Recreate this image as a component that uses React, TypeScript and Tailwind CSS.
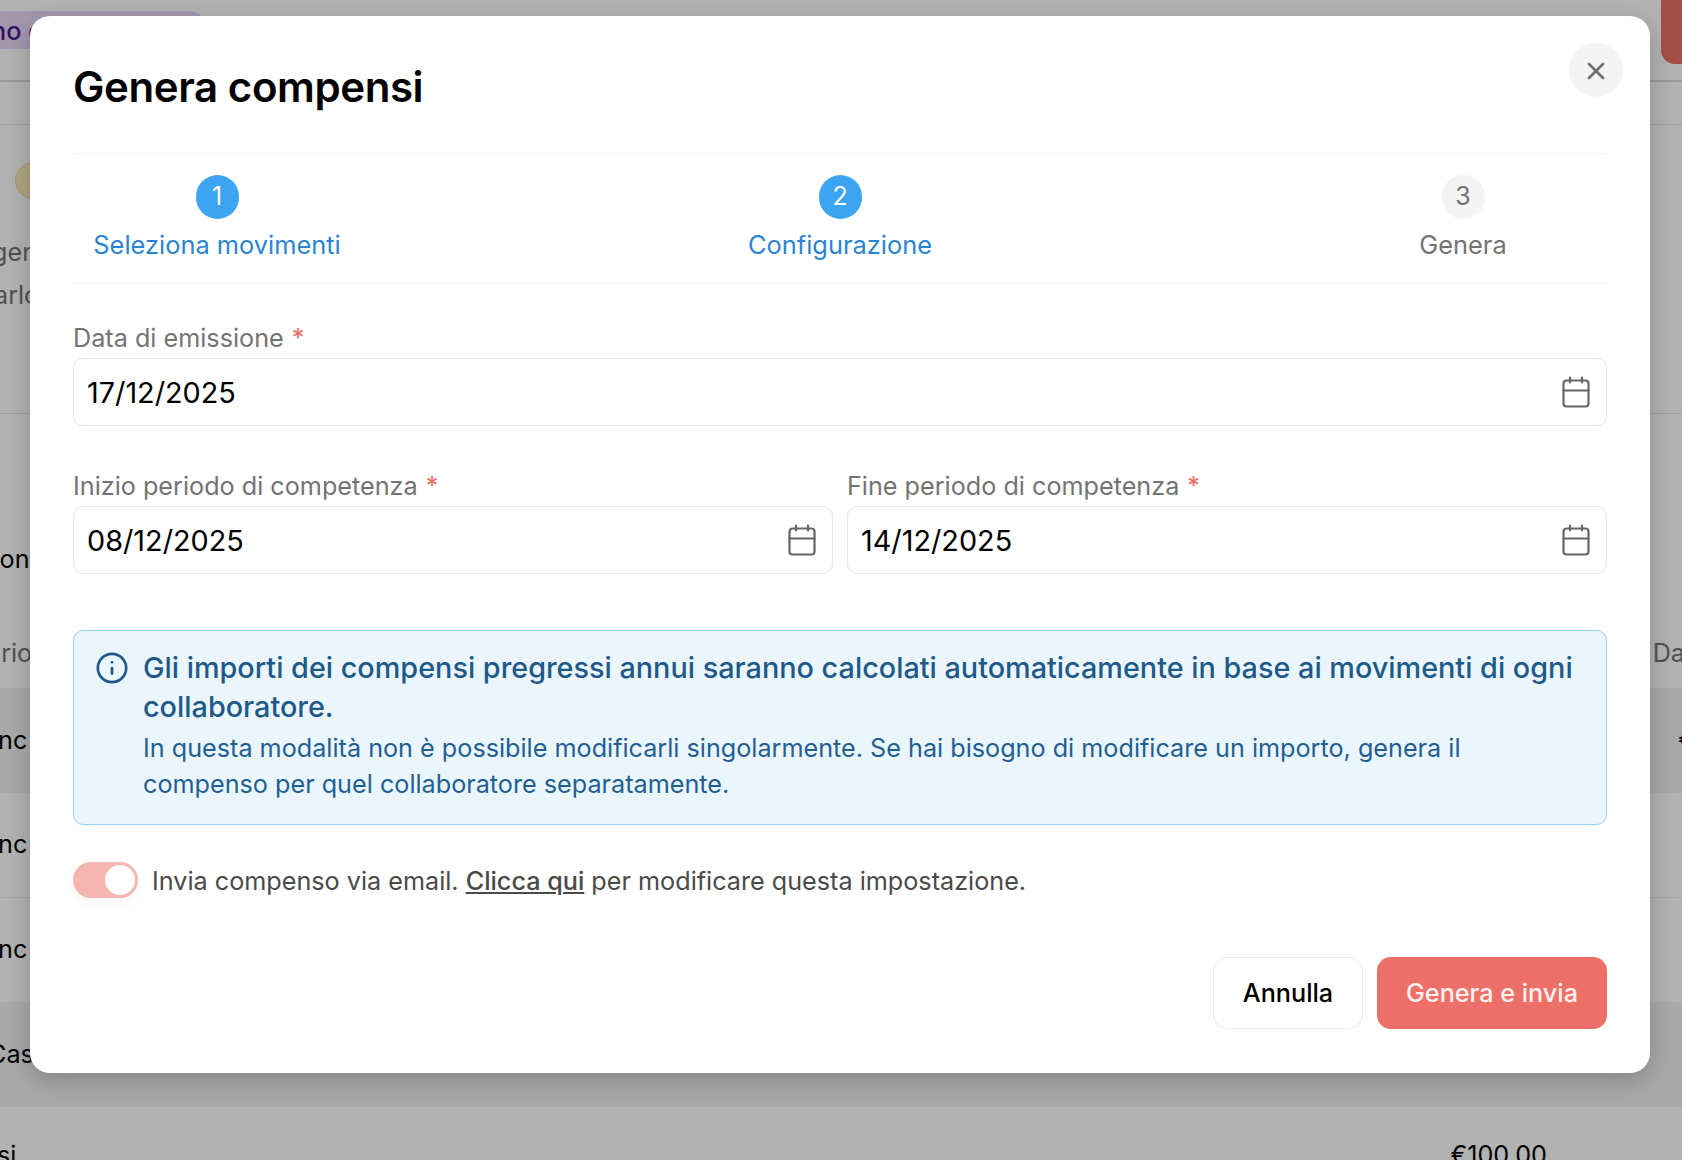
import { Info, X } from 'lucide-react';

function CalendarIcon() {
  return (
    <svg width="28" height="32" viewBox="0 0 28 32" fill="none" stroke="#666666" strokeWidth="2.2" strokeLinecap="round" className="shrink-0">
      <rect x="1.5" y="4.5" width="25" height="26" rx="3" />
      <path d="M1.5 14.5h25" />
      <path d="M8 1.5v5M20 1.5v5" />
    </svg>
  );
}

function Required() {
  return <span className="text-[#ef6b63] ml-2">*</span>;
}

function DateField({ label, value }: { label: string; value: string }) {
  return (
    <div className="flex-1 min-w-0">
      <div className="h-[38px] flex items-center text-[25.2px] text-[#737373]">
        {label}
        <Required />
      </div>
      <div className="h-[68px] flex items-center justify-between pl-[13px] pr-[16px] border border-[#e8e8e8] rounded-[10px] text-[28.8px] text-black">
        <span className="mt-[1px]">{value}</span>
        <CalendarIcon />
      </div>
    </div>
  );
}

function Step({ n, label, active }: { n: number; label: string; active: boolean }) {
  return (
    <div className="w-[288px] flex flex-col items-center">
      <div
        className={
          active
            ? 'w-[43px] h-[44px] rounded-full bg-[#3ba5f2] text-white flex items-center justify-center text-[25px]'
            : 'w-[43px] h-[44px] rounded-full bg-[#f4f4f4] text-[#737373] flex items-center justify-center text-[25px]'
        }
      >
        {n}
      </div>
      <div className={active ? 'mt-[7px] text-[25.4px] text-[#2a84d2]' : 'mt-[7px] text-[25.4px] text-[#737373]'}>{label}</div>
    </div>
  );
}

function Background() {
  return (
    <div className="text-[25.2px] text-black">
      <div className="h-[82px] border-b-2 border-[#d8d8d8] flex justify-between items-start">
        <div className="mt-[11px] w-[207px] h-[38px] rounded-r-[18px] bg-[#e9d9fb] text-[#4b1a8f] font-medium flex items-center">
          <span className="-ml-[9px] mt-[3px] whitespace-nowrap">no c</span>
        </div>
        <div className="w-[21px] h-[64px] rounded-bl-[14px] bg-[#ec7068]" />
      </div>
      <div className="h-[43px] border-b border-[#e2e2e2]" />
      <div className="h-[289px] pt-[37px] border-b border-[#e2e2e2]">
        <div className="ml-[15px] w-[37px] h-[37px] rounded-full bg-[#f9edbb] border border-[#eed98b]" />
        <div className="mt-[32px] -ml-[8px] text-[#737373] whitespace-nowrap leading-[43px]">
          <div>gen</div>
          <div className="ml-[2px]">arlo</div>
        </div>
      </div>
      <div className="h-[274px] flex flex-col justify-between">
        <div className="mt-[127px] -ml-[9px] whitespace-nowrap">fon</div>
        <div className="flex justify-between text-[#737373] pb-[15px] -ml-[13px] -mr-[3px]">
          <span>ario</span>
          <span>Da</span>
        </div>
      </div>
      <div className="h-[105px] bg-[#f2f2f2] flex items-center justify-between">
        <span className="-ml-[2px]">nc</span>
        <span className="-mr-[13px]">€</span>
      </div>
      <div className="h-[105px] border-b border-[#ededed] flex items-center">
        <span className="-ml-[2px]">nc</span>
      </div>
      <div className="h-[104px] flex items-center">
        <span className="-ml-[2px]">nc</span>
      </div>
      <div className="h-[105px] bg-[#f2f2f2] flex items-center">
        <span className="-ml-[12px]">Cas</span>
      </div>
      <div className="h-[53px] pt-[30px] flex items-start justify-between overflow-hidden pr-[135px]">
        <span className="-ml-[3px]">si</span>
        <span>€100,00</span>
      </div>
    </div>
  );
}

export default function App() {
  return (
    <div className="relative w-[1682px] h-[1160px] overflow-hidden bg-white font-['Inter',sans-serif]">
      <Background />
      <div className="absolute inset-0 bg-black/30 flex justify-center items-start pt-[16px]">
        <div className="relative w-[1620px] h-[1057px] ml-[-2px] bg-white rounded-[20px] px-[43px] shadow-[0_8px_24px_rgba(0,0,0,0.22)]">
          <button className="absolute right-[27px] top-[27px] w-[54px] h-[54px] rounded-full bg-[#f4f4f4] flex items-center justify-center text-[#707070]">
            <X size={28} strokeWidth={2.4} className="mt-[1px]" />
          </button>
          <div className="h-[138px] border-b border-[#f2f2f2] flex items-center">
            <h1 className="text-[42px] font-semibold text-black tracking-[-0.01em] mt-[4px]">Genera compensi</h1>
          </div>
          <div className="h-[130px] border-b border-[#f2f2f2] pt-[21px] flex justify-between">
            <Step n={1} label="Seleziona movimenti" active />
            <Step n={2} label="Configurazione" active />
            <Step n={3} label="Genera" active={false} />
          </div>
          <div className="mt-[36px]">
            <DateField label="Data di emissione" value="17/12/2025" />
          </div>
          <div className="mt-[42px] flex gap-[14px]">
            <DateField label="Inizio periodo di competenza" value="08/12/2025" />
            <DateField label="Fine periodo di competenza" value="14/12/2025" />
          </div>
          <div className="mt-[56px] h-[195px] border border-[#90d4fa] bg-[#ebf6fc] rounded-[10px] pl-[21px] pr-[30px] pt-[17px] flex gap-[14px] text-[#1d5a8a]">
            <Info size={34} strokeWidth={1.9} className="shrink-0 mt-[3px]" />
            <div>
              <div className="text-[28.8px] font-medium leading-[39px]">
                Gli importi dei compensi pregressi annui saranno calcolati automaticamente in base ai movimenti di ogni collaboratore.
              </div>
              <div className="text-[25.2px] leading-[36px] mt-[4px] text-[#1f5f94]">
                In questa modalità non è possibile modificarli singolarmente. Se hai bisogno di modificare un importo, genera il compenso per quel collaboratore separatamente.
              </div>
            </div>
          </div>
          <div className="mt-[36px] h-[38px] flex items-center gap-[14px] text-[25.2px] text-[#4a4a4a]">
            <div className="w-[65px] h-[36px] rounded-full bg-[#f5b5b1] flex items-center justify-end pr-[3px] shadow-[0_6px_12px_rgba(0,0,0,0.03)]">
              <div className="w-[30px] h-[30px] rounded-full bg-white" />
            </div>
            <span className="mt-[3px]">
              Invia compenso via email. <span className="font-medium underline">Clicca qui</span> per modificare questa impostazione.
            </span>
          </div>
          <div className="mt-[58px] flex justify-end gap-[14px] text-[25.2px]">
            <button className="w-[150px] h-[72px] pt-[1px] rounded-[14px] border border-[#e8e8e8] text-black font-medium">Annulla</button>
            <button className="w-[230px] h-[72px] pt-[1px] rounded-[14px] bg-[#ec7068] text-white/90 font-medium">Genera e invia</button>
          </div>
        </div>
      </div>
    </div>
  );
}
